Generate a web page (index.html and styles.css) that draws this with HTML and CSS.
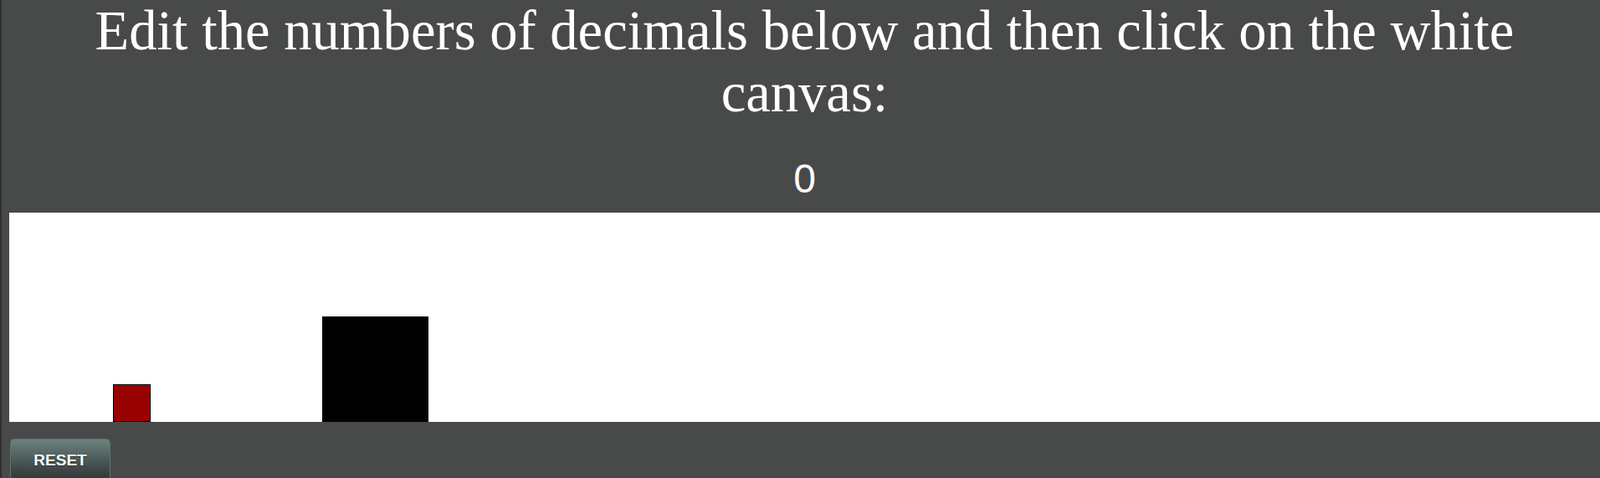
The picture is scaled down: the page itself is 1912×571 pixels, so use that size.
FILE: index.html
```html
<!DOCTYPE html>
<html>
<head>
<meta charset="utf-8">
<link rel="stylesheet" href="styles.css">
</head>
<body>
<div class="page">
  <h1 class="title">Edit the numbers of decimals below and then click on the white canvas:</h1>
  <div class="counter">0</div>
  <div class="stage">
    <svg class="stage-svg" width="1910" height="250" viewBox="0 0 1910 250">
      <rect x="124.5" y="205.5" width="44" height="44" fill="#990000" stroke="#000" stroke-width="1"/>
      <rect x="374" y="124" width="127" height="126" fill="#000"/>
    </svg>
  </div>
  <button class="reset">RESET</button>
</div>
</body>
</html>
```
FILE: styles.css
```css
html, body {
  margin: 0;
  padding: 0;
  overflow: hidden;
  height: 100%;
}
body {
  background: #484a49;
  border-left: 2px solid #2f3130;
}
.page {
  padding-left: 9px;
}
.title {
  margin: 0;
  font-family: "Liberation Serif", serif;
  font-weight: normal;
  font-size: 66.6px;
  line-height: 74px;
  color: #ffffff;
  text-align: center;
}
.counter {
  font-family: "Liberation Sans", Arial, sans-serif;
  font-size: 48px;
  line-height: 55px;
  color: #ffffff;
  text-align: center;
  margin-top: 38px;
}
.stage {
  margin-top: 13px;
  width: 1910px;
  height: 250px;
  background: #ffffff;
}
.stage-svg {
  display: block;
}
.reset {
  display: block;
  margin-top: 20px;
  margin-left: 1px;
  width: 120px;
  height: 50px;
  border: 1px solid #5f7270;
  border-radius: 5px;
  background: linear-gradient(to bottom, #6d827f 0%, #526260 40%, #3f4645 75%, #353938 100%);
  color: #ffffff;
  font-family: "Liberation Sans", Arial, sans-serif;
  font-weight: bold;
  font-size: 19px;
  padding: 1px 0 0 0;
  text-shadow: 0 1px 1px #2a2e2d;
}
```
